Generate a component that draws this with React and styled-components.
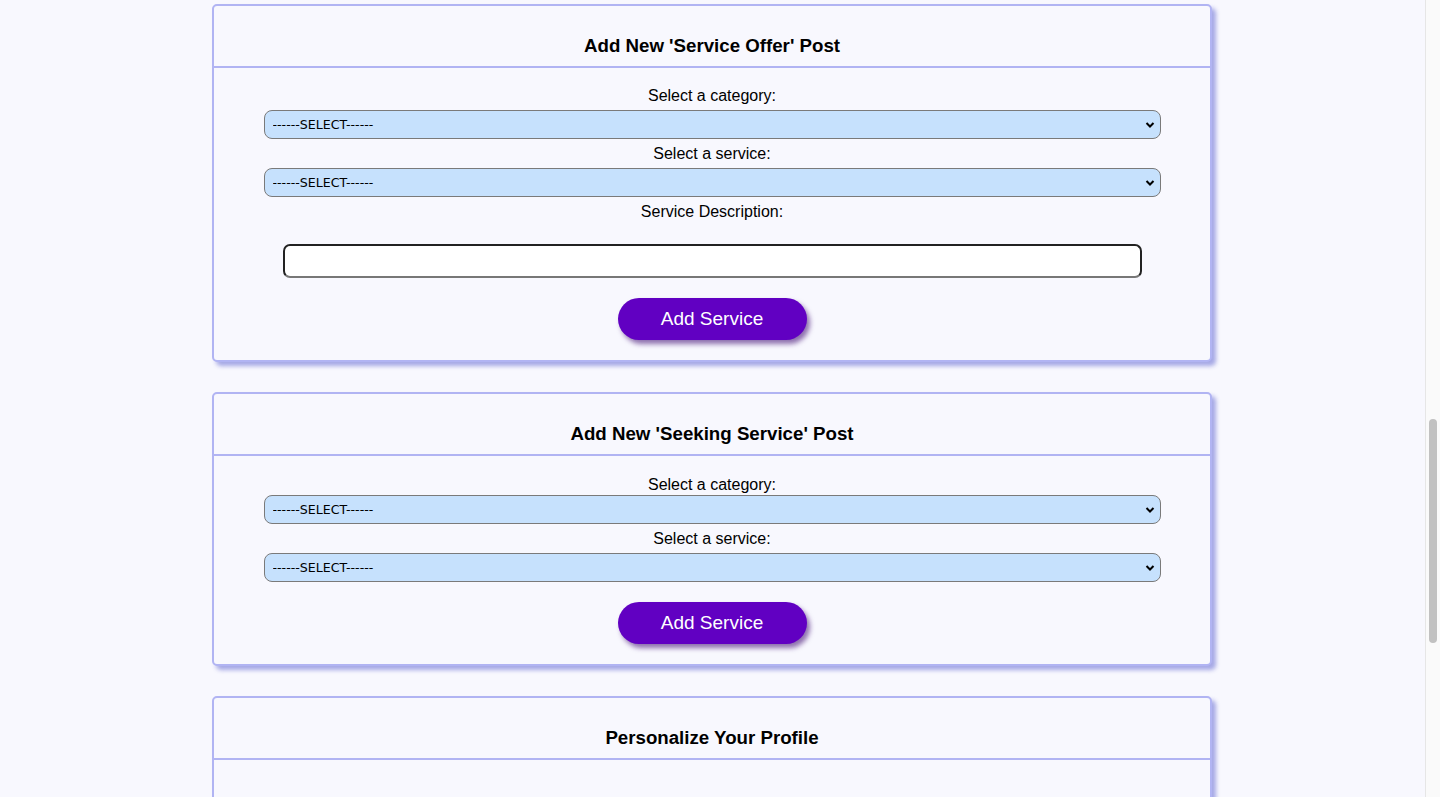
import React from "react";
import styled, { createGlobalStyle } from "styled-components";

const GlobalStyle = createGlobalStyle`
  html, body {
    margin: 0;
    padding: 0;
    height: 797px;
    overflow: hidden;
    background: #f8f8fe;
  }
  body {
    font-family: "Liberation Sans", Arial, sans-serif;
    color: #000;
  }
`;

const Page = styled.div`
  display: flex;
  width: 1440px;
  height: 797px;
  overflow: hidden;
`;

const Main = styled.main`
  flex: 1;
  display: flex;
  flex-direction: column;
  align-items: center;
  gap: 30px;
  padding-top: 4px;
  padding-right: 1px;
`;

const ScrollTrack = styled.div`
  width: 14px;
  border-left: 1px solid #e6e6e6;
  background: #fafafa;
  display: flex;
  flex-direction: column;
  align-items: center;
  padding-top: 419px;
`;

const ScrollThumb = styled.div`
  width: 8px;
  height: 224px;
  border-radius: 4px;
  background: #c1c1c1;
`;

const Card = styled.section`
  width: 1000px;
  box-sizing: border-box;
  border: 2px solid #b1b4f3;
  border-radius: 5px;
  box-shadow: 4px 4px 4px rgba(150, 154, 225, 0.85);
  background: #f8f8fe;
  flex-shrink: 0;
`;

const CardHeader = styled.div`
  height: 62px;
  box-sizing: border-box;
  border-bottom: 2px solid #b1b4f3;
  display: flex;
  align-items: flex-end;
  justify-content: center;
  padding-bottom: 9px;
`;

const CardTitle = styled.h3`
  margin: 0;
  font-size: 18.7px;
  font-weight: 700;
  line-height: 22px;
`;

const CardBody = styled.div`
  display: flex;
  flex-direction: column;
  align-items: center;
  min-height: 60px;
  padding: ${(p) => p.$top || 19}px 0 20px;
`;

const Label = styled.label`
  font-size: 16px;
  line-height: 18px;
  margin-bottom: ${(p) => (p.$tight ? 1 : 5)}px;
`;

const Select = styled.select`
  width: 897px;
  height: 29px;
  margin-bottom: 6px;
  background: #c6e1fd;
  border: 1px solid #7a7a7a;
  border-radius: 8px;
  padding: 0 5px 0 8px;
  font-family: "DejaVu Sans", Verdana, sans-serif;
  font-size: 12.6px;
  color: #000;
  appearance: none;
  background-image: url("data:image/svg+xml;utf8,<svg xmlns='http://www.w3.org/2000/svg' width='10' height='8' viewBox='0 0 10 8'><path d='M1.5 2l3.5 3.5L8.5 2' fill='none' stroke='black' stroke-width='2'/></svg>");
  background-repeat: no-repeat;
  background-position: right 5px center;
`;

const DescInput = styled.input`
  width: 859px;
  height: 34px;
  box-sizing: border-box;
  margin-top: 18px;
  margin-bottom: 6px;
  border: 2px solid #222;
  border-bottom-color: #777;
  border-radius: 7px;
  background: #fff;
`;

const AddButton = styled.button`
  margin-top: 14px;
  width: 189px;
  height: 42px;
  border: none;
  border-radius: 21px;
  background: #6100c2;
  color: #fff;
  font-family: "Liberation Sans", Arial, sans-serif;
  font-size: 19px;
  box-shadow: 3px 4px 5px rgba(70, 20, 120, 0.6);
  cursor: pointer;
`;

const SelectOption = () => <option>------SELECT------</option>;

export default function App() {
  return (
    <>
      <GlobalStyle />
      <Page>
        <Main>
          <Card>
            <CardHeader>
              <CardTitle>Add New 'Service Offer' Post</CardTitle>
            </CardHeader>
            <CardBody>
              <Label>Select a category:</Label>
              <Select>
                <SelectOption />
              </Select>
              <Label>Select a service:</Label>
              <Select>
                <SelectOption />
              </Select>
              <Label>Service Description:</Label>
              <DescInput type="text" />
              <AddButton>Add Service</AddButton>
            </CardBody>
          </Card>

          <Card>
            <CardHeader>
              <CardTitle>Add New 'Seeking Service' Post</CardTitle>
            </CardHeader>
            <CardBody $top={20}>
              <Label $tight>Select a category:</Label>
              <Select>
                <SelectOption />
              </Select>
              <Label>Select a service:</Label>
              <Select>
                <SelectOption />
              </Select>
              <AddButton>Add Service</AddButton>
            </CardBody>
          </Card>

          <Card>
            <CardHeader>
              <CardTitle>Personalize Your Profile</CardTitle>
            </CardHeader>
            <CardBody $top={40} />
          </Card>
        </Main>
        <ScrollTrack>
          <ScrollThumb />
        </ScrollTrack>
      </Page>
    </>
  );
}
